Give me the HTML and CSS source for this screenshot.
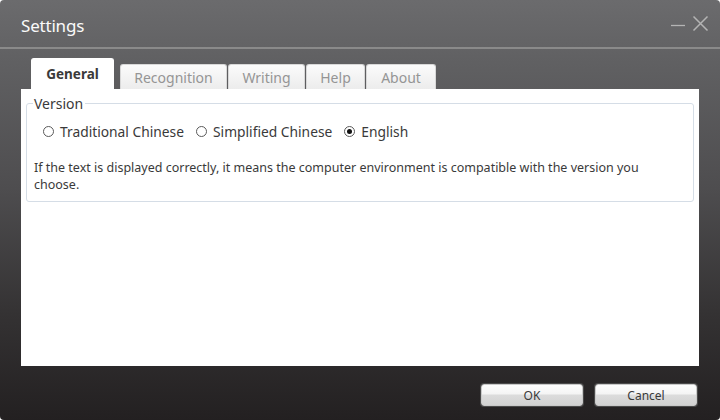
FILE: index.html
```html
<!DOCTYPE html>
<html lang="en">
<head>
  <meta charset="UTF-8">
  <title>Settings</title>
  <link rel="stylesheet" href="styles.css">
</head>
<body>
  <div class="window">
    <header class="titlebar">
      <div class="title">Settings</div>
      <div class="win-btns">
        <svg class="win-min" width="16" height="16" viewBox="0 0 16 16"><path d="M1 8.5h14" stroke="#b4b4b4" stroke-width="1.3"/></svg>
        <svg class="win-close" width="17" height="17" viewBox="0 0 17 17"><path d="M1.5 1.5l14 14M15.5 1.5l-14 14" stroke="#b4b4b4" stroke-width="1.5"/></svg>
      </div>
    </header>

    <div class="content">
      <nav class="tabs">
        <div class="tab active">General</div>
        <div class="tab">Recognition</div>
        <div class="tab">Writing</div>
        <div class="tab">Help</div>
        <div class="tab">About</div>
      </nav>

      <section class="panel">
        <fieldset class="group">
          <legend>Version</legend>
          <div class="radios">
            <label class="radio"><span class="dot"></span>Traditional Chinese</label>
            <label class="radio"><span class="dot"></span>Simplified Chinese</label>
            <label class="radio checked"><span class="dot"></span>English</label>
          </div>
          <p class="note">If the text is displayed correctly, it means the computer environment is compatible with the version you choose.</p>
        </fieldset>
      </section>
    </div>

    <footer class="actions">
      <button class="btn">OK</button>
      <button class="btn">Cancel</button>
    </footer>
  </div>
</body>
</html>
```

FILE: styles.css
```css
*{box-sizing:border-box;margin:0;padding:0}
html,body{width:720px;height:420px;background:#fff;font-family:"Noto Sans","Open Sans",sans-serif;overflow:hidden}

.window{
  width:720px;height:420px;
  display:flex;flex-direction:column;
  border-radius:4px;
  background:linear-gradient(#6b6b6d 0%,#606062 15%,#4e4d4f 45%,#343233 75%,#232021 100%);
}

.titlebar{
  height:49px;flex:none;
  display:flex;justify-content:space-between;align-items:center;
  padding:4px 11px 0 21px;
  border-bottom:2px solid #8a8a8a;
}
.title{color:#fafafa;font-size:17px;letter-spacing:-0.2px}
.win-btns{display:flex;align-items:center;gap:6px;margin-top:-4px}
.win-min{margin-top:2px}

.content{padding:9px 21px 0 21px;flex:none}
.tabs{display:flex;align-items:flex-end;height:31px;padding-left:10px;gap:1px}
.tab{
  height:25px;padding:0 14px;
  display:flex;align-items:center;
  font-size:14px;color:#959595;
  background:linear-gradient(#fbfbfb,#ececec);
  border:1px solid #d8d8d8;border-bottom:none;
  border-radius:3px 3px 0 0;
}
.tab.active{
  height:31px;padding:0 15px;margin-right:5px;
  background:#fff;border-color:#fff;
  color:#3a3a3a;font-weight:bold;font-size:13.5px;
}
.tab:nth-child(2){width:107px;justify-content:center}
.tab:nth-child(3){width:77px;justify-content:center}
.tab:nth-child(4){width:59px;justify-content:center}
.tab:nth-child(5){width:70px;justify-content:center}
.tab.active{width:83px;justify-content:center}

.panel{background:#fff;height:277px;padding:6px 5px 0 5px}
.group{
  border:1px solid #d5dde6;border-radius:3px;
  height:107px;padding:0 7px 0 6px;
}
.group legend{font-size:14px;color:#3a3a3a;padding:0 2px 0 1px;line-height:17px}
.radios{display:flex;gap:12px;margin-top:10px;padding-left:10px}
.radio{display:flex;align-items:center;font-size:13.8px;color:#3a3a3a}
.dot{
  width:11px;height:11px;margin-right:6px;
  border:1px solid #5a5a5a;border-radius:50%;
  display:inline-flex;align-items:center;justify-content:center;
  background:#fff;
}
.radio.checked .dot::after{content:"";width:5px;height:5px;border-radius:50%;background:#111}
.note{font-size:12.5px;color:#3a3a3a;line-height:17px;margin-top:18px;padding:0 30px 0 1px}

.actions{
  display:flex;justify-content:flex-end;gap:12px;
  padding:18px 23px 0 0;
}
.btn{
  width:102px;height:22px;
  font-family:inherit;font-size:12px;color:#3a3a3a;
  border:1px solid #c9c9c9;border-radius:3px;
  box-shadow:0 0 0 1px #4a4a4a;
  background:linear-gradient(#fefefe 0%,#f4f4f4 45%,#dcdcdc 50%,#d2d2d2 100%);
}
```
